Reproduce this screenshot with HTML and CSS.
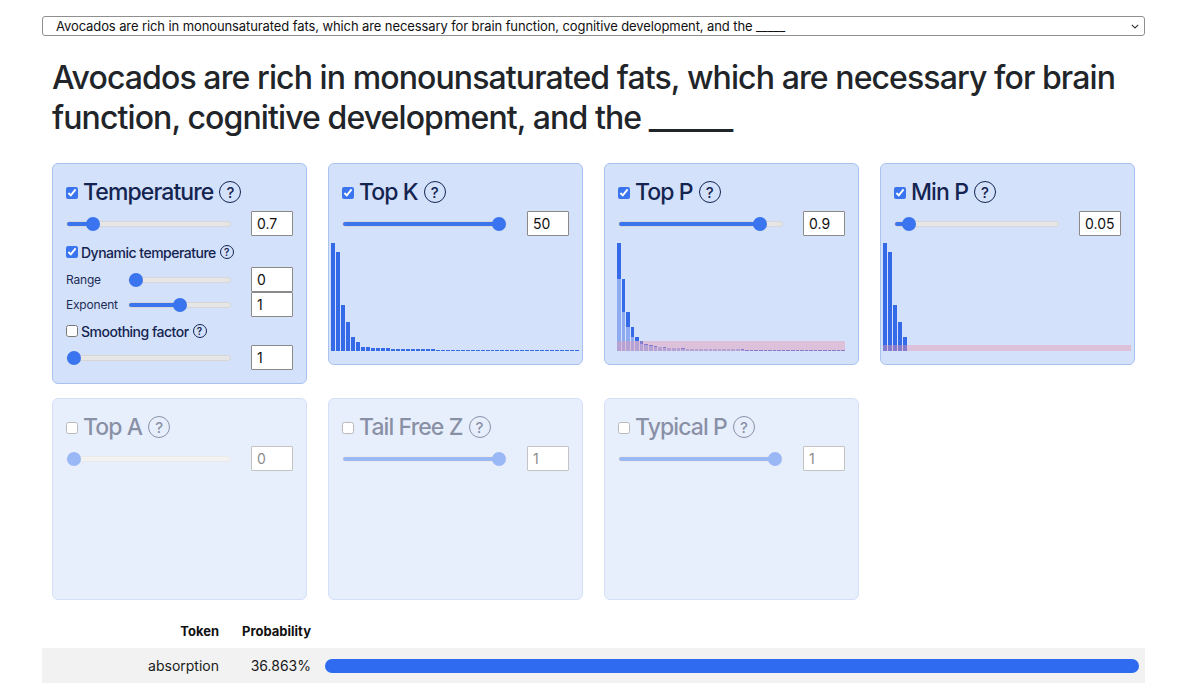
FILE: index.html
```html
<!DOCTYPE html>
<html lang="en">
<head>
<meta charset="utf-8">
<title>Sampler playground</title>
<link rel="stylesheet" href="styles.css">
</head>
<body>
<div class="page">
  <div class="select-wrap">
    <select class="prompt-select">
      <option>Avocados are rich in monounsaturated fats, which are necessary for brain function, cognitive development, and the _____</option>
    </select>
    <svg class="chev" width="8" height="5" viewBox="0 0 8 5"><path d="M0.8 0.8 L4 4 L7.2 0.8" fill="none" stroke="#333" stroke-width="1.1"/></svg>
  </div>

  <div class="content">
    <h1 class="prompt">Avocados are rich in monounsaturated fats, which are necessary for brain function, cognitive development, and the ______</h1>

    <div class="cards">
      <!-- Temperature -->
      <section class="card">
        <div class="card-head">
          <input type="checkbox" class="head-check" checked>
          <h2 class="card-title">Temperature</h2>
          <span class="help">?</span>
        </div>
        <div class="slider-row">
          <input type="range" class="slider" min="0" max="100" value="13" style="--f:0.13">
          <input type="text" class="num" value="0.7">
        </div>
        <label class="opt-row">
          <input type="checkbox" class="opt-check" checked>
          <span class="opt-label">Dynamic temperature</span>
          <span class="help help-sm">?</span>
        </label>
        <div class="sub-row">
          <span class="sub-label">Range</span>
          <input type="range" class="slider slider-sub" min="0" max="100" value="0" style="--f:0">
          <input type="text" class="num" value="0">
        </div>
        <div class="sub-row sub-row-tight">
          <span class="sub-label">Exponent</span>
          <input type="range" class="slider slider-sub" min="0" max="100" value="50" style="--f:0.5">
          <input type="text" class="num" value="1">
        </div>
        <label class="opt-row opt-row-2">
          <input type="checkbox" class="opt-check">
          <span class="opt-label">Smoothing factor</span>
          <span class="help help-sm">?</span>
        </label>
        <div class="slider-row">
          <input type="range" class="slider" min="0" max="100" value="0" style="--f:0">
          <input type="text" class="num" value="1">
        </div>
      </section>

      <!-- Top K -->
      <section class="card">
        <div class="card-head">
          <input type="checkbox" class="head-check" checked>
          <h2 class="card-title">Top K</h2>
          <span class="help">?</span>
        </div>
        <div class="slider-row">
          <input type="range" class="slider" min="0" max="100" value="100" style="--f:1">
          <input type="text" class="num" value="50">
        </div>
        <div class="chart chart-wide">
          <div class="bars">
            <i class="bar" style="--h:108px"></i><i class="bar" style="--h:99px"></i><i class="bar" style="--h:46px"></i><i class="bar" style="--h:29px"></i><i class="bar" style="--h:14px"></i><i class="bar" style="--h:9px"></i><i class="bar" style="--h:4px"></i><i class="bar" style="--h:4px"></i><i class="bar" style="--h:3px"></i><i class="bar" style="--h:3px"></i>
            <i class="bar" style="--h:3px"></i><i class="bar" style="--h:3px"></i><i class="bar" style="--h:2px"></i><i class="bar" style="--h:2px"></i><i class="bar" style="--h:2px"></i><i class="bar" style="--h:2px"></i><i class="bar" style="--h:2px"></i><i class="bar" style="--h:2px"></i><i class="bar" style="--h:2px"></i><i class="bar" style="--h:2px"></i>
            <i class="bar" style="--h:2px"></i><i class="bar" style="--h:1px"></i><i class="bar" style="--h:1px"></i><i class="bar" style="--h:1px"></i><i class="bar" style="--h:1px"></i><i class="bar" style="--h:1px"></i><i class="bar" style="--h:1px"></i><i class="bar" style="--h:1px"></i><i class="bar" style="--h:1px"></i><i class="bar" style="--h:1px"></i>
            <i class="bar" style="--h:1px"></i><i class="bar" style="--h:1px"></i><i class="bar" style="--h:1px"></i><i class="bar" style="--h:1px"></i><i class="bar" style="--h:1px"></i><i class="bar" style="--h:1px"></i><i class="bar" style="--h:1px"></i><i class="bar" style="--h:1px"></i><i class="bar" style="--h:1px"></i><i class="bar" style="--h:1px"></i>
            <i class="bar" style="--h:1px"></i><i class="bar" style="--h:1px"></i><i class="bar" style="--h:1px"></i><i class="bar" style="--h:1px"></i><i class="bar" style="--h:1px"></i><i class="bar" style="--h:1px"></i><i class="bar" style="--h:1px"></i><i class="bar" style="--h:1px"></i><i class="bar" style="--h:1px"></i><i class="bar" style="--h:1px"></i>
          </div>
        </div>
      </section>

      <!-- Top P -->
      <section class="card">
        <div class="card-head">
          <input type="checkbox" class="head-check" checked>
          <h2 class="card-title">Top P</h2>
          <span class="help">?</span>
        </div>
        <div class="slider-row">
          <input type="range" class="slider" min="0" max="100" value="90" style="--f:0.9">
          <input type="text" class="num" value="0.9">
        </div>
        <div class="chart chart-narrow">
          <div class="bars">
            <i class="bar bar-split" style="--h:108px;--l:72px"></i><i class="bar bar-split" style="--h:72px;--l:39px"></i><i class="bar bar-split" style="--h:39px;--l:24px"></i><i class="bar bar-split" style="--h:24px;--l:14px"></i><i class="bar bar-split" style="--h:14px;--l:10px"></i><i class="bar bar-split" style="--h:10px;--l:7px"></i><i class="bar bar-split" style="--h:7px;--l:6px"></i><i class="bar bar-split" style="--h:6px;--l:5px"></i><i class="bar bar-split" style="--h:5px;--l:4px"></i><i class="bar bar-split" style="--h:4px;--l:4px"></i>
            <i class="bar bar-split" style="--h:4px;--l:3px"></i><i class="bar bar-split" style="--h:3px;--l:3px"></i><i class="bar bar-split" style="--h:3px;--l:3px"></i><i class="bar bar-split" style="--h:3px;--l:3px"></i><i class="bar bar-split" style="--h:3px;--l:2px"></i><i class="bar bar-split" style="--h:2px;--l:2px"></i><i class="bar bar-split" style="--h:2px;--l:2px"></i><i class="bar bar-split" style="--h:2px;--l:2px"></i><i class="bar bar-split" style="--h:2px;--l:2px"></i><i class="bar bar-split" style="--h:2px;--l:2px"></i>
            <i class="bar bar-split" style="--h:2px;--l:2px"></i><i class="bar bar-split" style="--h:2px;--l:2px"></i><i class="bar bar-split" style="--h:2px;--l:2px"></i><i class="bar bar-split" style="--h:2px;--l:2px"></i><i class="bar bar-split" style="--h:2px;--l:2px"></i><i class="bar bar-split" style="--h:2px;--l:2px"></i><i class="bar bar-split" style="--h:2px;--l:2px"></i><i class="bar bar-split" style="--h:2px;--l:1px"></i><i class="bar" style="--h:1px"></i><i class="bar" style="--h:1px"></i>
            <i class="bar" style="--h:1px"></i><i class="bar" style="--h:1px"></i><i class="bar" style="--h:1px"></i><i class="bar" style="--h:1px"></i><i class="bar" style="--h:1px"></i><i class="bar" style="--h:1px"></i><i class="bar" style="--h:1px"></i><i class="bar" style="--h:1px"></i><i class="bar" style="--h:1px"></i><i class="bar" style="--h:1px"></i>
            <i class="bar" style="--h:1px"></i><i class="bar" style="--h:1px"></i><i class="bar" style="--h:1px"></i><i class="bar" style="--h:1px"></i><i class="bar" style="--h:1px"></i><i class="bar" style="--h:1px"></i><i class="bar" style="--h:1px"></i><i class="bar" style="--h:1px"></i><i class="bar" style="--h:1px"></i><i class="bar" style="--h:1px"></i>
          </div>
          <div class="cutoff cutoff-p"></div>
        </div>
      </section>

      <!-- Min P -->
      <section class="card">
        <div class="card-head">
          <input type="checkbox" class="head-check" checked>
          <h2 class="card-title">Min P</h2>
          <span class="help">?</span>
        </div>
        <div class="slider-row">
          <input type="range" class="slider" min="0" max="100" value="5" style="--f:0.05">
          <input type="text" class="num" value="0.05">
        </div>
        <div class="chart chart-wide">
          <div class="bars">
            <i class="bar" style="--h:108px"></i><i class="bar" style="--h:99px"></i><i class="bar" style="--h:46px"></i><i class="bar" style="--h:29px"></i><i class="bar" style="--h:14px"></i><i class="bar" style="--h:0px"></i><i class="bar" style="--h:0px"></i><i class="bar" style="--h:0px"></i><i class="bar" style="--h:0px"></i><i class="bar" style="--h:0px"></i>
            <i class="bar" style="--h:0px"></i><i class="bar" style="--h:0px"></i><i class="bar" style="--h:0px"></i><i class="bar" style="--h:0px"></i><i class="bar" style="--h:0px"></i><i class="bar" style="--h:0px"></i><i class="bar" style="--h:0px"></i><i class="bar" style="--h:0px"></i><i class="bar" style="--h:0px"></i><i class="bar" style="--h:0px"></i>
            <i class="bar" style="--h:0px"></i><i class="bar" style="--h:0px"></i><i class="bar" style="--h:0px"></i><i class="bar" style="--h:0px"></i><i class="bar" style="--h:0px"></i><i class="bar" style="--h:0px"></i><i class="bar" style="--h:0px"></i><i class="bar" style="--h:0px"></i><i class="bar" style="--h:0px"></i><i class="bar" style="--h:0px"></i>
            <i class="bar" style="--h:0px"></i><i class="bar" style="--h:0px"></i><i class="bar" style="--h:0px"></i><i class="bar" style="--h:0px"></i><i class="bar" style="--h:0px"></i><i class="bar" style="--h:0px"></i><i class="bar" style="--h:0px"></i><i class="bar" style="--h:0px"></i><i class="bar" style="--h:0px"></i><i class="bar" style="--h:0px"></i>
            <i class="bar" style="--h:0px"></i><i class="bar" style="--h:0px"></i><i class="bar" style="--h:0px"></i><i class="bar" style="--h:0px"></i><i class="bar" style="--h:0px"></i><i class="bar" style="--h:0px"></i><i class="bar" style="--h:0px"></i><i class="bar" style="--h:0px"></i><i class="bar" style="--h:0px"></i><i class="bar" style="--h:0px"></i>
          </div>
          <div class="cutoff cutoff-min"></div>
        </div>
      </section>

      <!-- Top A -->
      <section class="card card-off">
        <div class="card-head">
          <input type="checkbox" class="head-check">
          <h2 class="card-title">Top A</h2>
          <span class="help">?</span>
        </div>
        <div class="slider-row">
          <input type="range" class="slider" min="0" max="100" value="0" style="--f:0">
          <input type="text" class="num" value="0">
        </div>
      </section>

      <!-- Tail Free Z -->
      <section class="card card-off">
        <div class="card-head">
          <input type="checkbox" class="head-check">
          <h2 class="card-title">Tail Free Z</h2>
          <span class="help">?</span>
        </div>
        <div class="slider-row">
          <input type="range" class="slider" min="0" max="100" value="100" style="--f:1">
          <input type="text" class="num" value="1">
        </div>
      </section>

      <!-- Typical P -->
      <section class="card card-off">
        <div class="card-head">
          <input type="checkbox" class="head-check">
          <h2 class="card-title">Typical P</h2>
          <span class="help">?</span>
        </div>
        <div class="slider-row">
          <input type="range" class="slider" min="0" max="100" value="100" style="--f:1">
          <input type="text" class="num" value="1">
        </div>
      </section>
    </div>
  </div>

  <table class="probs">
    <thead>
      <tr><th class="col-token">Token</th><th class="col-prob">Probability</th><th class="col-bar"></th></tr>
    </thead>
    <tbody>
      <tr class="row-alt"><td class="col-token">absorption</td><td class="col-prob">36.863%</td><td class="col-bar"><div class="pbar" style="width:100%"></div></td></tr>
    </tbody>
  </table>
</div>
</body>
</html>
```

FILE: styles.css
```css
* { box-sizing: border-box; }

html, body {
  margin: 0;
  background: #ffffff;
}

body {
  font-family: Inter, "Noto Sans", "Liberation Sans", sans-serif;
  color: #212529;
  overflow: hidden;
}

.page {
  width: 1103px;
  margin-left: 42px;
  padding-top: 16px;
}

/* ---------- select ---------- */
.select-wrap {
  position: relative;
  height: 20px;
}

.prompt-select {
  -webkit-appearance: none;
  appearance: none;
  display: block;
  width: 100%;
  height: 20px;
  margin: 0;
  padding: 0 20px 0 13px;
  border: 1px solid #8f8f8f;
  border-radius: 3px;
  background: #ffffff;
  font-family: Inter, "Noto Sans", sans-serif;
  font-size: 13px;
  letter-spacing: -0.1px;
  color: #111;
  line-height: 18px;
}

.chev {
  position: absolute;
  right: 6px;
  top: 8px;
}

/* ---------- heading ---------- */
.content {
  padding: 0 10px;
}

.prompt {
  margin: 22px 0 25px;
  font-size: 32px;
  font-weight: 500;
  line-height: 40px;
  letter-spacing: -0.9px;
  color: #212529;
}

/* ---------- cards ---------- */
.cards {
  display: grid;
  grid-template-columns: repeat(4, 255px);
  column-gap: 21px;
  row-gap: 14px;
  align-items: start;
}

.card {
  background: #d3e1fb;
  border: 1px solid #a9c3f0;
  border-radius: 6px;
  padding: 13px 13px 13px;
  min-height: 202px;
  color: #142450;
}

.card-off {
  opacity: 0.5;
}

.card-head {
  display: flex;
  align-items: center;
  height: 30px;
}

.head-check {
  width: 12px;
  height: 12px;
  margin: 2px 5px 0 0;
  accent-color: #3a74ee;
  flex: none;
}

.card-title {
  margin: 0;
  font-size: 23px;
  font-weight: 500;
  letter-spacing: -0.9px;
  line-height: 30px;
  color: #142450;
}

.help {
  display: inline-flex;
  align-items: center;
  justify-content: center;
  width: 22px;
  height: 22px;
  margin-left: 6px;
  border: 1.5px solid #142450;
  border-radius: 50%;
  font-size: 15px;
  font-weight: 500;
  line-height: 1;
  color: #142450;
  flex: none;
}

.help-sm {
  width: 14px;
  height: 14px;
  margin-left: 4px;
  border-width: 1px;
  font-size: 10px;
  font-weight: 600;
}

/* ---------- sliders & inputs ---------- */
.slider-row {
  display: flex;
  align-items: center;
  justify-content: space-between;
  margin-top: 4px;
  height: 25px;
}

.sub-row {
  display: flex;
  align-items: center;
  height: 25px;
  margin-top: 5px;
}

.sub-row-tight {
  margin-top: 0;
}

.sub-label {
  width: 62px;
  font-size: 12px;
  letter-spacing: -0.2px;
  color: #1e2d55;
}

.slider {
  -webkit-appearance: none;
  appearance: none;
  width: 165px;
  height: 14px;
  margin: 0;
  padding: 0;
  background: transparent;
  --fill: calc(7px + var(--f) * (100% - 14px));
}

.slider-sub {
  width: 103px;
  margin-right: 20px;
}

.slider::-webkit-slider-runnable-track {
  height: 6px;
  border-radius: 3px;
  border: 1px solid #d6d6d6;
  background: linear-gradient(to right, #3a74ee var(--fill), #e6e6e6 var(--fill));
}

.slider::-webkit-slider-thumb {
  -webkit-appearance: none;
  appearance: none;
  width: 14px;
  height: 14px;
  margin-top: -5px;
  border-radius: 50%;
  background: #3a74ee;
  border: none;
}

.num {
  width: 42px;
  height: 25px;
  margin: 0;
  padding: 0 5px;
  border: 1px solid #8a8a8a;
  border-radius: 1px;
  background: #ffffff;
  font-family: Inter, "Noto Sans", sans-serif;
  font-size: 14px;
  color: #111;
  flex: none;
}

.opt-row {
  display: flex;
  align-items: center;
  height: 20px;
  margin-top: 6px;
}

.opt-row-2 {
  margin-top: 4px;
}

.opt-check {
  width: 12px;
  height: 12px;
  margin: 0 3px 0 0;
  accent-color: #3a74ee;
}

.opt-label {
  font-size: 14px;
  font-weight: 500;
  letter-spacing: -0.5px;
  color: #142450;
}

/* ---------- charts ---------- */
.chart {
  position: relative;
  height: 111px;
  margin-top: 4px;
}

.chart-wide {
  width: 248px;
  margin-left: -11px;
}

.chart-narrow {
  width: 228px;
  margin-left: -1px;
}

.bars {
  display: flex;
  align-items: flex-end;
  gap: 1px;
  height: 100%;
}

.bar {
  flex: 1 1 0;
  height: var(--h);
  background: #3469e8;
}

.bar-split {
  background: linear-gradient(to top, #8eabf2 var(--l), #3469e8 var(--l));
}

.cutoff {
  position: absolute;
  left: 0;
  right: 0;
  bottom: 0;
  background: rgba(236, 150, 175, 0.42);
}

.cutoff-p { height: 10px; }
.cutoff-min { height: 6px; }

/* ---------- table ---------- */
.probs {
  width: 100%;
  margin-top: 14px;
  border-collapse: collapse;
  font-size: 14px;
  color: #1a1a1a;
}

.probs th {
  height: 34px;
  font-size: 13px;
  font-weight: 700;
  color: #111;
  text-align: right;
  padding: 0 6px;
}

.probs td {
  height: 35px;
  padding: 0 6px;
  text-align: right;
}

.col-token { width: 183px; }
.col-prob { width: 92px; }

.probs td.col-bar {
  padding: 0 6px 0 8px;
}

.row-alt {
  background: #f2f2f2;
}

.pbar {
  height: 14px;
  border-radius: 7px;
  background: #2f6bf0;
}
```
